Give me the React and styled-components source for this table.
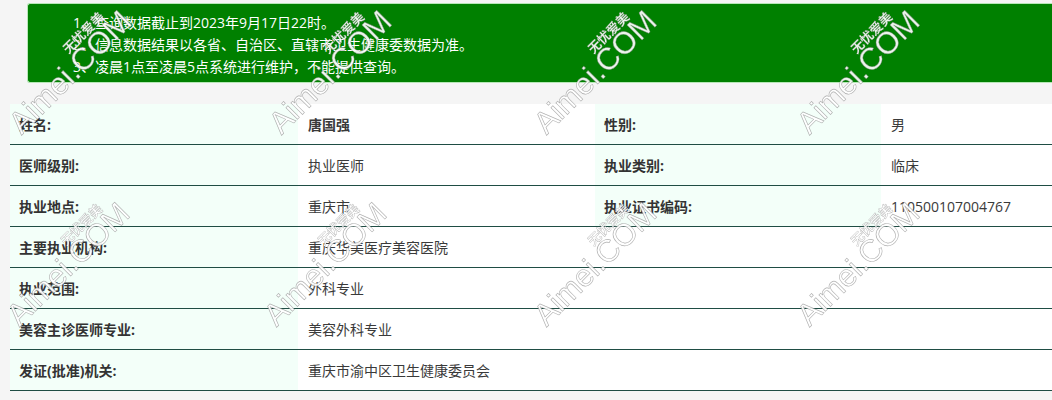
import React from "react";
import styled, { createGlobalStyle } from "styled-components";

const GlobalStyle = createGlobalStyle`
  html, body {
    margin: 0;
    padding: 0;
    background: #f5f5f5;
    overflow: hidden;
  }
  body {
    font-family: "Open Sans", "Noto Sans CJK SC", sans-serif;
  }
`;

const Page = styled.div`
  width: 100%;
  padding-top: 3px;
`;

const Notice = styled.div`
  margin-left: 27px;
  background: #008000;
  border: 1px solid #b7e7b7;
  border-right: none;
  border-radius: 3px 0 0 3px;
  padding: 8px 0 4px 45px;
  color: #fff;
  font-size: 14px;
  line-height: 22px;
`;

const NoticeLine = styled.div`
  white-space: nowrap;
`;

const InfoTable = styled.div`
  margin: 21px 0 0 10px;
  display: grid;
  grid-template-columns: 288px 297px 286px 1fr;
`;

const Cell = styled.div`
  height: 40px;
  border-bottom: 1px solid #1f4d44;
  display: flex;
  align-items: center;
  padding-left: ${(p) => (p.$label ? 9 : 10)}px;
  background: ${(p) => (p.$label ? "#f3fff9" : "#fff")};
  font-family: "Open Sans", "Noto Sans CJK SC", sans-serif;
  font-size: 14px;
  color: ${(p) => (p.$label ? "#333" : "#3a3a3a")};
  font-weight: ${(p) => (p.$label || p.$bold ? 700 : 400)};
  grid-column: ${(p) => (p.$span ? `span ${p.$span}` : "auto")};
  white-space: nowrap;
`;

const Overlay = styled.div`
  position: fixed;
  inset: 0;
  pointer-events: none;
  overflow: hidden;
  z-index: 5;
`;

const Mark = styled.div`
  position: absolute;
  left: ${(p) => p.$x}px;
  top: ${(p) => p.$y}px;
  transform: translate(-50%, -50%) rotate(-45deg);
  font-family: "Liberation Sans", Arial, sans-serif;
  font-size: 31px;
  line-height: 1;
  white-space: nowrap;
  color: rgba(255, 255, 255, 0.92);
  -webkit-text-stroke: 0.6px rgba(120, 120, 120, 0.6);
`;

const MarkSub = styled.span`
  position: absolute;
  right: 16px;
  bottom: 100%;
  margin-bottom: -3px;
  font-family: "Noto Sans CJK SC", sans-serif;
  font-size: 13px;
  font-weight: 700;
  -webkit-text-stroke: 0.4px rgba(120, 120, 120, 0.55);
`;

const rows = [
  [
    { t: "姓名:", label: true },
    { t: "唐国强", bold: true },
    { t: "性别:", label: true },
    { t: "男" },
  ],
  [
    { t: "医师级别:", label: true },
    { t: "执业医师" },
    { t: "执业类别:", label: true },
    { t: "临床" },
  ],
  [
    { t: "执业地点:", label: true },
    { t: "重庆市" },
    { t: "执业证书编码:", label: true },
    { t: "110500107004767" },
  ],
  [{ t: "主要执业机构:", label: true }, { t: "重庆华美医疗美容医院", span: 3 }],
  [{ t: "执业范围:", label: true }, { t: "外科专业", span: 3 }],
  [{ t: "美容主诊医师专业:", label: true }, { t: "美容外科专业", span: 3 }],
  [{ t: "发证(批准)机关:", label: true }, { t: "重庆市渝中区卫生健康委员会", span: 3 }],
];

const marks = [
  [70, 72], [330, 72], [595, 72], [858, 72],
  [68, 264], [325, 264], [595, 264], [858, 264],
];

export default function App() {
  return (
    <>
      <GlobalStyle />
      <Page>
        <Notice>
          <NoticeLine>1、查询数据截止到2023年9月17日22时。</NoticeLine>
          <NoticeLine>2、信息数据结果以各省、自治区、直辖市卫生健康委数据为准。</NoticeLine>
          <NoticeLine>3、凌晨1点至凌晨5点系统进行维护，不能提供查询。</NoticeLine>
        </Notice>

        <InfoTable>
          {rows.map((row, i) =>
            row.map((c, j) => (
              <Cell key={`${i}-${j}`} $label={c.label} $bold={c.bold} $span={c.span}>
                {c.t}
              </Cell>
            ))
          )}
        </InfoTable>
      </Page>

      <Overlay>
        {marks.map(([x, y], i) => (
          <Mark key={i} $x={x} $y={y}>
            <MarkSub>无忧爱美</MarkSub>
            Aimei.COM
          </Mark>
        ))}
      </Overlay>
    </>
  );
}
